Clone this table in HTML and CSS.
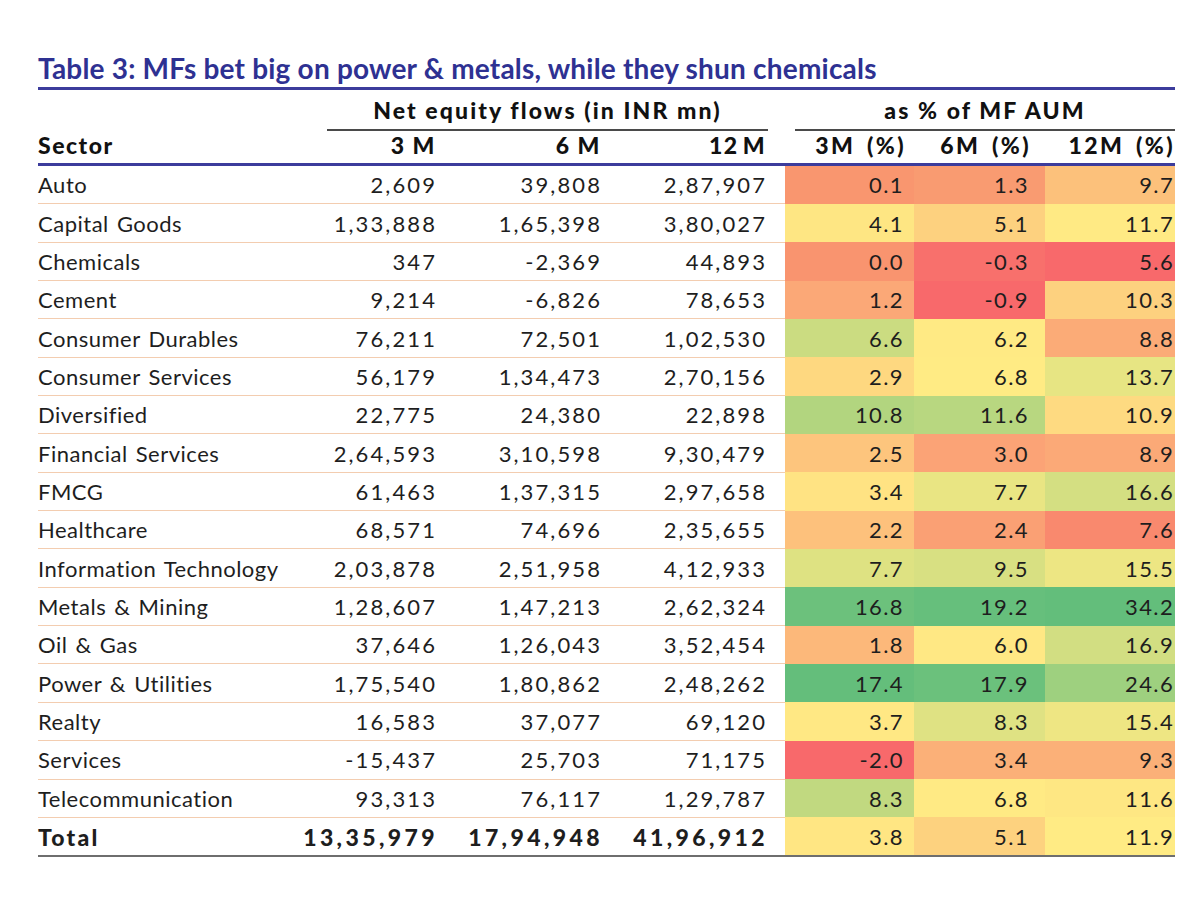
FILE: index.html
```html
<!DOCTYPE html>
<html lang="en">
<head>
<meta charset="utf-8">
<title>Table 3: MFs bet big on power &amp; metals</title>
<link rel="stylesheet" href="styles.css">
</head>
<body>
<div class="page">
  <h1 class="title">Table 3: MFs bet big on power &amp; metals, while they shun chemicals</h1>
  <table class="flows">
    <colgroup>
      <col class="c-sector"><col class="c-n3"><col class="c-n6"><col class="c-n12"><col class="c-p3"><col class="c-p6"><col class="c-p12">
    </colgroup>
    <thead>
      <tr class="group-row">
        <th></th>
        <th colspan="3"><div class="grp grp-net">Net equity flows (in INR mn)</div></th>
        <th colspan="3"><div class="grp grp-aum">as % of MF AUM</div></th>
      </tr>
      <tr class="col-row">
        <th class="sector">Sector</th>
        <th class="n n3">3 M</th>
        <th class="n n6">6 M</th>
        <th class="n n12">12 M</th>
        <th class="p p3">3M (%)</th>
        <th class="p p6">6M (%)</th>
        <th class="p p12">12M (%)</th>
      </tr>
    </thead>
    <tbody>
      <tr><td class="sector">Auto</td><td class="n">2,609</td><td class="n">39,808</td><td class="n n12">2,87,907</td><td class="p p3" style="background:#f9966f">0.1</td><td class="p p6" style="background:#f99b71">1.3</td><td class="p p12" style="background:#fcc17b">9.7</td></tr>
      <tr><td class="sector">Capital Goods</td><td class="n">1,33,888</td><td class="n">1,65,398</td><td class="n n12">3,80,027</td><td class="p p3" style="background:#fee683">4.1</td><td class="p p6" style="background:#fdd17f">5.1</td><td class="p p12" style="background:#ffea84">11.7</td></tr>
      <tr><td class="sector">Chemicals</td><td class="n">347</td><td class="n">-2,369</td><td class="n n12">44,893</td><td class="p p3" style="background:#f9946f">0.0</td><td class="p p6" style="background:#f8706c">-0.3</td><td class="p p12" style="background:#f8696b">5.6</td></tr>
      <tr><td class="sector">Cement</td><td class="n">9,214</td><td class="n">-6,826</td><td class="n n12">78,653</td><td class="p p3" style="background:#fba877">1.2</td><td class="p p6" style="background:#f8696b">-0.9</td><td class="p p12" style="background:#fdd17f">10.3</td></tr>
      <tr><td class="sector">Consumer Durables</td><td class="n">76,211</td><td class="n">72,501</td><td class="n n12">1,02,530</td><td class="p p3" style="background:#cbdc81">6.6</td><td class="p p6" style="background:#ffea84">6.2</td><td class="p p12" style="background:#fbab77">8.8</td></tr>
      <tr><td class="sector">Consumer Services</td><td class="n">56,179</td><td class="n">1,34,473</td><td class="n n12">2,70,156</td><td class="p p3" style="background:#fed880">2.9</td><td class="p p6" style="background:#ffeb84">6.8</td><td class="p p12" style="background:#e7e583">13.7</td></tr>
      <tr><td class="sector">Diversified</td><td class="n">22,775</td><td class="n">24,380</td><td class="n n12">22,898</td><td class="p p3" style="background:#b2d57f">10.8</td><td class="p p6" style="background:#b8d780">11.6</td><td class="p p12" style="background:#feda81">10.9</td></tr>
      <tr><td class="sector">Financial Services</td><td class="n">2,64,593</td><td class="n">3,10,598</td><td class="n n12">9,30,479</td><td class="p p3" style="background:#fdc57d">2.5</td><td class="p p6" style="background:#fba376">3.0</td><td class="p p12" style="background:#fba977">8.9</td></tr>
      <tr><td class="sector">FMCG</td><td class="n">61,463</td><td class="n">1,37,315</td><td class="n n12">2,97,658</td><td class="p p3" style="background:#ffe383">3.4</td><td class="p p6" style="background:#e9e583">7.7</td><td class="p p12" style="background:#d4df82">16.6</td></tr>
      <tr><td class="sector">Healthcare</td><td class="n">68,571</td><td class="n">74,696</td><td class="n n12">2,35,655</td><td class="p p3" style="background:#fdc17c">2.2</td><td class="p p6" style="background:#faa074">2.4</td><td class="p p12" style="background:#f9896e">7.6</td></tr>
      <tr><td class="sector">Information Technology</td><td class="n">2,03,878</td><td class="n">2,51,958</td><td class="n n12">4,12,933</td><td class="p p3" style="background:#dee282">7.7</td><td class="p p6" style="background:#d8e082">9.5</td><td class="p p12" style="background:#ede683">15.5</td></tr>
      <tr><td class="sector">Metals &amp; Mining</td><td class="n">1,28,607</td><td class="n">1,47,213</td><td class="n n12">2,62,324</td><td class="p p3" style="background:#6cc17c">16.8</td><td class="p p6" style="background:#66bf7c">19.2</td><td class="p p12" style="background:#63be7b">34.2</td></tr>
      <tr><td class="sector">Oil &amp; Gas</td><td class="n">37,646</td><td class="n">1,26,043</td><td class="n n12">3,52,454</td><td class="p p3" style="background:#fcb87a">1.8</td><td class="p p6" style="background:#ffe884">6.0</td><td class="p p12" style="background:#d2de82">16.9</td></tr>
      <tr><td class="sector">Power &amp; Utilities</td><td class="n">1,75,540</td><td class="n">1,80,862</td><td class="n n12">2,48,262</td><td class="p p3" style="background:#64be7b">17.4</td><td class="p p6" style="background:#6bc17c">17.9</td><td class="p p12" style="background:#9ed07f">24.6</td></tr>
      <tr><td class="sector">Realty</td><td class="n">16,583</td><td class="n">37,077</td><td class="n n12">69,120</td><td class="p p3" style="background:#ffe884">3.7</td><td class="p p6" style="background:#dfe283">8.3</td><td class="p p12" style="background:#eee683">15.4</td></tr>
      <tr><td class="sector">Services</td><td class="n">-15,437</td><td class="n">25,703</td><td class="n n12">71,175</td><td class="p p3" style="background:#f8696b">-2.0</td><td class="p p6" style="background:#fbb078">3.4</td><td class="p p12" style="background:#fbb078">9.3</td></tr>
      <tr><td class="sector">Telecommunication</td><td class="n">93,313</td><td class="n">76,117</td><td class="n n12">1,29,787</td><td class="p p3" style="background:#c1d980">8.3</td><td class="p p6" style="background:#ffea84">6.8</td><td class="p p12" style="background:#fee783">11.6</td></tr>
      <tr class="total"><td class="sector">Total</td><td class="n">13,35,979</td><td class="n">17,94,948</td><td class="n n12">41,96,912</td><td class="p p3" style="background:#ffe683">3.8</td><td class="p p6" style="background:#fdd27f">5.1</td><td class="p p12" style="background:#ffeb84">11.9</td></tr>
    </tbody>
  </table>
</div>
</body>
</html>
```

FILE: styles.css
```css
html, body {
  margin: 0;
  padding: 0;
  background: #ffffff;
}

.page {
  width: 1137px;
  padding: 52px 0 0 38px;
  font-family: Lato, "Open Sans", sans-serif;
  color: #1e1e1e;
}

.title {
  margin: 0;
  font-size: 28px;
  line-height: 32px;
  font-weight: 700;
  color: #2e3192;
  letter-spacing: 0.2px;
  padding-bottom: 3px;
  border-bottom: 3px solid #3c3c9c;
}

.flows {
  width: 1137px;
  border-collapse: collapse;
  table-layout: fixed;
  font-size: 22px;
}

.c-sector { width: 262px; }
.c-n3 { width: 145px; }
.c-n6 { width: 165px; }
.c-n12 { width: 175px; }
.c-p3 { width: 129px; }
.c-p6 { width: 131px; }
.c-p12 { width: 130px; }

.flows th {
  font-weight: 900;
  font-size: 23px;
  color: #111111;
  padding: 0;
  white-space: nowrap;
}

.group-row th {
  height: 41px;
  vertical-align: bottom;
}

.grp {
  text-align: center;
  padding-bottom: 5px;
  border-bottom: 2px solid #4a4a4a;
  line-height: 28px;
  letter-spacing: 2.1px;
}

.grp-net {
  margin: 0 17px 0 27px;
}

.grp-aum {
  margin: 0 0 0 10px;
}

.col-row th {
  height: 27px;
  padding-bottom: 4px;
  border-bottom: 3px solid #3c3c9c;
  letter-spacing: 1.5px;
}

.flows .sector {
  text-align: left;
  padding-left: 0;
}

.flows td {
  height: 37.35px;
  padding: 0;
  white-space: nowrap;
  letter-spacing: 2.1px;
}

.flows tbody td.sector,
.flows tbody td.n {
  border-bottom: 1px solid #f3cdb0;
}

.flows tbody td.sector {
  letter-spacing: 0.5px;
  word-spacing: 2px;
}

.flows .n {
  text-align: right;
  padding-right: 8px;
}

.flows .n.n12 {
  padding-right: 18px;
}

.flows th.n { padding-right: 9px; }
.flows th.n.n12 { padding-right: 19px; word-spacing: -3px; }

.flows .p {
  text-align: right;
  letter-spacing: 1.4px;
}

.flows .p3 { padding-right: 10px; }
.flows .p6 { padding-right: 16px; }
.flows .p12 { padding-right: 1px; }

.flows th.p { letter-spacing: 2.4px; word-spacing: 4px; }
.flows th.p3 { padding-right: 8px; }
.flows th.p6 { padding-right: 14px; }
.flows th.p12 { padding-right: 0; }

.flows tbody tr.total td.sector,
.flows tbody tr.total td.n {
  font-weight: 900;
  font-size: 23px;
  letter-spacing: 3.4px;
  border-bottom: 2px solid #6e6e6e;
}

.flows tbody tr.total td.n {
  padding-right: 7px;
}

.flows tbody tr.total td.n.n12 {
  padding-right: 17px;
}

.flows tbody tr.total td.sector {
  letter-spacing: 2.2px;
}

.flows tbody tr.total td.p {
  border-bottom: 2px solid #6e6e6e;
}
```
